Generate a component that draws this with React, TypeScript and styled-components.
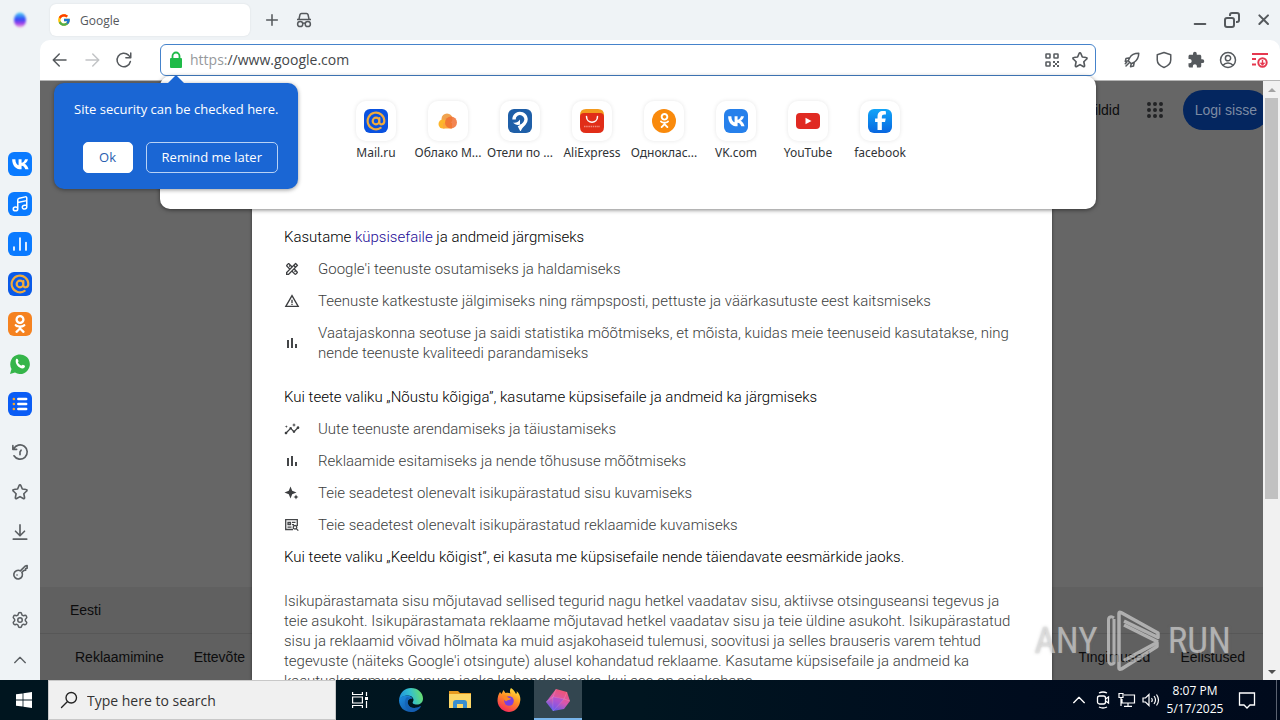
import React from "react";
import styled, { createGlobalStyle, css } from "styled-components";
import { Settings } from "lucide-react";
import { FcGoogle } from "react-icons/fc";
import { FaOdnoklassniki, FaFacebookF } from "react-icons/fa6";
import {
  MdOutlineDesignServices,
  MdWarningAmber,
  MdInsights,
  MdExtension,
} from "react-icons/md";

const Global = createGlobalStyle`
  *, *::before, *::after { box-sizing: border-box; }
  body { margin: 0; font-family: "Liberation Sans", Arial, sans-serif; }
  button { font: inherit; padding: 0; border: 0; background: none; color: inherit; }
  svg { display: block; flex: none; }
  a { color: inherit; text-decoration: none; }
`;

const ui = `"Open Sans", "Segoe UI", sans-serif`;

/* ---------- shell ---------- */

const Desktop = styled.div`
  display: flex;
  flex-direction: column;
  height: 100vh;
  overflow: hidden;
`;

const Browser = styled.div`
  display: flex;
  flex: 1;
  min-height: 0;
  background: #eff3f6;
  color: #5b5f63;
`;

const Sidebar = styled.nav`
  display: flex;
  flex-direction: column;
  width: 40px;
  flex: none;
`;

const SideGroup = styled.div<{ $push?: boolean }>`
  display: flex;
  flex-direction: column;
  margin-top: ${(p) => (p.$push ? "auto" : "8px")};
`;

const SideButton = styled.button`
  display: flex;
  align-items: center;
  justify-content: center;
  width: 40px;
  height: 40px;
`;

const AppBadge = styled.span<{ $bg: string; $round?: boolean }>`
  display: flex;
  align-items: center;
  justify-content: center;
  width: 24px;
  height: 24px;
  border-radius: ${(p) => (p.$round ? "12px" : "6px")};
  background: ${(p) => p.$bg};
  color: #fff;
`;

const MainColumn = styled.div`
  display: flex;
  flex-direction: column;
  flex: 1;
  min-width: 0;
`;

/* ---------- tab strip ---------- */

const TabStrip = styled.div`
  display: flex;
  align-items: center;
  height: 40px;
  padding-left: 10px;
  flex: none;
`;

const Tab = styled.div`
  display: flex;
  align-items: center;
  gap: 9px;
  width: 200px;
  height: 32px;
  margin-right: 6px;
  padding-left: 7px;
  border-radius: 6px;
  background: #fff;
  box-shadow: 0 0 2px rgba(0, 0, 0, 0.1);
  font: 12px ${ui};
  color: #55585c;
`;

const StripButton = styled.button<{ $slim?: boolean }>`
  display: flex;
  align-items: center;
  justify-content: center;
  width: ${(p) => (p.$slim ? "28px" : "32px")};
  height: 32px;
  color: #55595d;
`;

const WindowControls = styled.div`
  display: flex;
  margin-left: auto;
`;

/* ---------- toolbar ---------- */

const Toolbar = styled.div`
  display: flex;
  align-items: center;
  height: 41px;
  flex: none;
  padding: 0 4px 1px;
  background: #fff;
  border-bottom: 1px solid #b5b5b5;
  border-radius: 10px 10px 0 0;
`;

const ToolGroup = styled.div`
  display: flex;
`;

const Address = styled.form`
  position: relative;
  z-index: 5;
  display: flex;
  align-items: center;
  flex: 1;
  height: 32px;
  margin: 0 20px;
  padding: 0 1px 0 8px;
  border: 1px solid #4583cb;
  border-radius: 6px;
  background: #fff;
`;

const AddressText = styled.label`
  display: flex;
  flex: 1;
  margin-left: 7px;
  color: #44474a;
  font: 14px/20px ${ui};
`;

const Scheme = styled.span`
  color: #96999c;
`;

const AddressInput = styled.input`
  flex: 1;
  min-width: 0;
  padding: 0;
  border: 0;
  outline: 0;
  background: none;
  font: inherit;
  color: inherit;
`;

const Suggestions = styled.div`
  position: absolute;
  top: 31px;
  left: -1px;
  right: -1px;
  display: flex;
  justify-content: center;
  height: 133px;
  padding-top: 25px;
  border-radius: 10px;
  background: #fff;
  box-shadow: 0 1px 4px rgba(0, 0, 0, 0.5);
`;

const Tile = styled.a`
  display: flex;
  flex-direction: column;
  align-items: center;
  width: 72px;
  font: 12px/16px "Noto Sans", sans-serif;
  color: #303336;
  white-space: nowrap;
`;

const TileFrame = styled.span`
  display: flex;
  align-items: center;
  justify-content: center;
  width: 40px;
  height: 40px;
  margin-bottom: 4px;
  border-radius: 10px;
  box-shadow: 0 0 4px rgba(0, 0, 0, 0.1);
`;

const Hint = styled.div`
  position: absolute;
  top: 38px;
  left: -107px;
  width: 244px;
  padding: 16px 20px;
  border-radius: 10px;
  background: #1a66d4;
  box-shadow: 0 1px 4px rgba(0, 0, 0, 0.4);
  color: #fff;
  font: 13px/20px ${ui};
  white-space: nowrap;

  &::before {
    content: "";
    position: absolute;
    top: -8px;
    left: 114px;
    border: 8px solid transparent;
    border-top: 0;
    border-bottom-color: #1a66d4;
  }
`;

const HintText = styled.p`
  margin: 0 0 23px;
`;

const HintActions = styled.div`
  display: flex;
  justify-content: flex-end;
  gap: 13px;
`;

const HintButton = styled.button<{ $filled?: boolean }>`
  min-width: 50px;
  height: 31px;
  padding: 0 15px;
  border: 1px solid ${(p) => (p.$filled ? "#fff" : "#b8d2f5")};
  border-radius: 5px;
  ${(p) =>
    p.$filled &&
    css`
      background: #fff;
      color: #2a5daf;
    `}
`;

/* ---------- page ---------- */

const Viewport = styled.main`
  position: relative;
  display: flex;
  flex: 1;
  flex-direction: column;
  justify-content: space-between;
  min-height: 0;
  overflow: hidden;
  background: #666;
  color: #0c0c0d;
  font-size: 14px;
`;

const PageHeader = styled.header`
  display: flex;
  align-items: center;
  justify-content: flex-end;
  padding: 9px 11px;
`;

const AppsButton = styled.button`
  margin: 0 16px 0 23px;
  color: #222325;
`;

const SignIn = styled.button`
  height: 40px;
  padding: 0 12px;
  border-radius: 20px;
  background: #04265f;
  color: #7d8ba3;
`;

const PageFooter = styled.footer`
  background: #606060;
  line-height: 46px;
`;

const Country = styled.div`
  padding: 0 30px;
  border-bottom: 1px solid #575757;
`;

const FooterLinks = styled.div`
  display: flex;
  justify-content: space-between;
  padding: 0 20px;
`;

const FooterGroup = styled.div`
  display: flex;

  a {
    padding: 0 15px;
  }
`;

const Overlay = styled.div`
  position: absolute;
  inset: 0 16px 0 0;
  display: flex;
  justify-content: center;
`;

const Consent = styled.section`
  width: 800px;
  padding: 146px 32px 0;
  background: #fff;
  box-shadow: 0 0 3px rgba(0, 0, 0, 0.5);
  color: #3c3e40;
  font: 300 15px/20px Roboto, "Liberation Sans", sans-serif;
`;

const Lead = styled.p`
  margin: 0;
  color: #000;

  a {
    color: #1a0a96;
  }
`;

const Reasons = styled.ul<{ $last?: boolean }>`
  display: flex;
  flex-direction: column;
  gap: 12px;
  margin: 12px 0 ${(p) => (p.$last ? "12px" : "24px")};
  padding: 0;
  list-style: none;

  li {
    display: flex;
    align-items: center;
    gap: 18px;
  }
`;

const Details = styled.p`
  margin: 24px 0 0;
  white-space: pre-line;
`;

const Scrollbar = styled.div`
  position: absolute;
  inset: 0 0 0 auto;
  display: flex;
  flex-direction: column;
  align-items: center;
  width: 17px;
  background: #f1f1f1;
`;

const ScrollArrow = styled.span<{ $down?: boolean }>`
  width: 0;
  height: 0;
  margin: ${(p) => (p.$down ? "auto 0 6px" : "7px 0 6px")};
  border: 4px solid transparent;
  ${(p) =>
    p.$down
      ? css`
          border-top-color: #505050;
          border-bottom: 0;
        `
      : css`
          border-bottom-color: #a3a3a3;
          border-top: 0;
        `}
`;

const ScrollThumb = styled.span`
  width: 13px;
  height: 67%;
  background: #c1c1c1;
`;

const Watermark = styled.div`
  position: absolute;
  right: 49px;
  bottom: 5px;
  display: flex;
  align-items: center;
  gap: 7px;
  color: rgba(228, 228, 228, 0.6);
  font: 37px/68px "Roboto Condensed", "Open Sans Condensed", "Noto Sans Condensed", "Liberation Sans Narrow", Roboto, sans-serif;
  text-shadow: 0 0 3px rgba(120, 120, 120, 0.5);
`;

/* ---------- taskbar ---------- */

const Taskbar = styled.footer`
  display: flex;
  align-items: stretch;
  height: 40px;
  flex: none;
  background: linear-gradient(90deg, #00151f, #001520 50%, #000c1e 80%, #000a1c);
  color: #fff;
  font-family: ${ui};
`;

const TaskButton = styled.button<{ $active?: boolean }>`
  display: flex;
  align-items: center;
  justify-content: center;
  width: 48px;
  ${(p) =>
    p.$active &&
    css`
      background: #334650;
      box-shadow: inset 0 -2px #78b4ea;
    `}
`;

const TaskApps = styled.div`
  display: flex;
  gap: 1px;
  margin-left: 3px;
`;

const SearchBox = styled.label`
  display: flex;
  align-items: center;
  gap: 9px;
  width: 288px;
  padding-left: 11px;
  background: #f0f0f0;
  border: 1px solid #c8c8c8;
  color: #222;
`;

const SearchInput = styled.input`
  flex: 1;
  min-width: 0;
  padding: 0;
  border: 0;
  outline: 0;
  background: none;
  font: 14px ${ui};

  &::placeholder {
    color: #333;
    opacity: 1;
  }
`;

const Tray = styled.div`
  display: flex;
  align-items: center;
  margin-left: auto;
  padding-right: 3px;
`;

const TrayButton = styled.button<{ $w: number }>`
  display: flex;
  align-items: center;
  justify-content: center;
  width: ${(p) => p.$w}px;
  height: 40px;
`;

const Clock = styled.time`
  width: 64px;
  font-size: 12px;
  line-height: 18px;
  text-align: center;
  white-space: nowrap;
`;

const ShowDesktop = styled.span`
  width: 1px;
  height: 40px;
  margin-left: 9px;
  background: #5a6270;
`;

/* ---------- icons ---------- */

type LineProps = { d: string; size?: number; width?: number; color?: string };

/* Stroke icon on a 24-unit grid. */
const Line = ({ d, size = 20, width = 2, color = "currentColor" }: LineProps) => (
  <svg
    width={size}
    height={size}
    viewBox="0 0 24 24"
    fill="none"
    stroke={color}
    strokeWidth={width}
    strokeLinecap="round"
    strokeLinejoin="round"
  >
    <path d={d} />
  </svg>
);

const star =
  "M12 2.5c.5 0 .9.3 1.1.8l2 4.7 5.1.6c1.1.1 1.5 1.4.7 2.1l-3.8 3.6 1 5.1c.2 1-.9 1.8-1.8 1.3L12 18.2l-4.4 2.5c-.9.5-2-.3-1.8-1.3l1-5.1L3 10.700c-.8-.7-.4-2 .7-2.100l5.100-.6 2-4.700c.2-.5.700-.8 1.200-.8z";

const At = ({ size = 20 }: { size?: number }) => (
  <Line
    size={size}
    width={2.6}
    color="#f0ab3c"
    d="M16 12a4 4 0 1 1-8 0 4 4 0 0 1 8 0zM16 8.500V13.500c0 3.600 6 3.400 6-1.500A10 10 0 1 0 17.500 20.300"
  />
);

const VkMark = () => (
  <svg width="18" height="18" viewBox="0 0 24 24" fill="#fff">
    <path d="M13.300 19C6.200 19 1.700 14 1.500 5.500h4.300c.1 5.200 2.300 7.500 4.300 8V5.500h4v4.800c2-.2 3.900-2.300 4.600-4.800h3.900c-.6 3.200-2.900 5.300-4.600 6.300 1.700.8 4.300 2.700 5.400 7.200h-4.300c-.8-2.500-2.500-4.300-5-4.600V19z" />
  </svg>
);

const BrowserMark = () => (
  <svg width="24" height="24" viewBox="0 0 24 24">
    <defs>
      <linearGradient id="mark" x2="0" y2="1">
        <stop offset="0" stopColor="#50d0f5" />
        <stop offset=".45" stopColor="#3048f8" />
        <stop offset=".75" stopColor="#a440e8" />
        <stop offset="1" stopColor="#f5b8dc" />
      </linearGradient>
      <filter id="soft" x="-30%" y="-30%" width="160%" height="160%">
        <feGaussianBlur stdDeviation="1" />
      </filter>
    </defs>
    <ellipse cx="12" cy="12" rx="6" ry="7.500" fill="url(#mark)" filter="url(#soft)" />
  </svg>
);

const Incognito = () => (
  <svg width="16" height="16" viewBox="0 0 16 16" fill="none" stroke="currentColor" strokeWidth="1.500">
    <path d="M1 7.500h14M3 7l1-4.500Q4.300 1.500 5.500 1.500h5q1.200 0 1.500 1L13 7" />
    <circle cx="4.200" cy="12" r="2.600" />
    <circle cx="11.800" cy="12" r="2.600" />
    <path d="M6.800 11.500q1.200-.8 2.400 0" />
  </svg>
);

const Restore = () => (
  <svg width="16" height="16" viewBox="0 0 16 16" fill="none" stroke="currentColor" strokeWidth="2">
    <rect x="1" y="6" width="9" height="9" rx="2" />
    <path d="M6 4V3q0-2 2-2h5q2 0 2 2v5q0 2-2 2h-1" />
  </svg>
);

const Lock = () => (
  <svg width="14" height="18" viewBox="0 0 14 18">
    <path d="M3.500 8V5a3.500 3.500 0 0 1 7 0v3" fill="none" stroke="#1fbb48" strokeWidth="1.800" />
    <rect x="1" y="7" width="12" height="10" rx="1" fill="#1fbb48" />
  </svg>
);

const QrCode = () => (
  <svg width="16" height="16" viewBox="0 0 16 16" fill="none" stroke="#5b5f63" strokeWidth="1.600">
    <rect x="2" y="2" width="4" height="4" rx=".5" />
    <rect x="10" y="2" width="4" height="4" rx=".5" />
    <rect x="2" y="10" width="4" height="4" rx=".5" />
    <path d="M9 10h2M13 10h2M11 12h2M9 14h2M13 14h2" strokeWidth="2" />
  </svg>
);

const Downloads = () => (
  <svg width="18" height="18" viewBox="0 0 18 18" fill="none" stroke="#e5384f">
    <path d="M1 3h16M1 8h4M1 13.500h4" strokeWidth="1.800" />
    <circle cx="11.500" cy="11.500" r="4.200" fill="#fff" strokeWidth="2" />
    <path d="M11.500 9v4.500M9.500 11.700l2 2 2-2" strokeWidth="1.400" />
  </svg>
);

const Rocket = () => (
  <Line
    d="M21 3c-6 0-10 2-12 6L4 10l-1 4 4-1 4 4-1 4 4-1 1-5c4-3 6-7 6-12zM9 9l-2 4M15 15l-4 2M8 16l-4 4M5 15l-2 2"
    width={2}
    size={18}
  />
);

const Account = () => (
  <Line
    d="M22 12a10 10 0 1 1-20 0 10 10 0 0 1 20 0zM15.500 9.500a3.500 3.500 0 1 1-7 0 3.500 3.500 0 0 1 7 0zM5.500 19c3-4 10-4 13 0"
    size={18}
  />
);

const AppsGrid = () => (
  <svg width="24" height="24" viewBox="0 0 24 24" fill="none" stroke="currentColor" strokeWidth="4" strokeLinecap="round">
    <path d="M6 6h0M12 6h0M18 6h0M6 12h0M12 12h0M18 12h0M6 18h0M12 18h0M18 18h0" />
  </svg>
);

const Bars = () => (
  <svg width="16" height="16" viewBox="0 0 16 16" fill="#444648">
    <path d="M3 5h2v8H3zM7 3h2v10H7zM11 9h2v4h-2z" />
  </svg>
);

const Sparkle = () => (
  <svg width="16" height="16" viewBox="0 0 16 16" fill="#3c3e40">
    <path d="M6.500 1.500l1.700 4.300 4.300 1.700-4.300 1.700-1.700 4.300-1.700-4.300L.5 7.500l4.300-1.700zM12 9.500l.8 1.700 1.700.8-1.700.8-.8 1.700-.8-1.700-1.700-.8 1.700-.8z" />
  </svg>
);

const AdSearch = () => (
  <svg width="16" height="16" viewBox="0 0 16 16" fill="none" stroke="#444648" strokeWidth="1.300">
    <path d="M9 12.500H1.700V2.700h11.600V9" />
    <path d="M4 5.500h2.500v2H4zM8 5.300h3.500M8 7.700h2M3.500 10.200h4" />
    <circle cx="11" cy="10.300" r="1.800" />
    <path d="M12.300 11.600l2 2" />
  </svg>
);

const Cloud = () => (
  <svg width="20" height="16" viewBox="0 0 20 16">
    <circle cx="9" cy="6" r="5.500" fill="#f0a350" />
    <circle cx="5" cy="11" r="4.500" fill="#fdb52b" />
    <path d="M5 10h9v5.500H5z" fill="#fba83b" />
    <circle cx="13" cy="9.500" r="6" fill="#f07033" opacity=".85" />
  </svg>
);

const HotelPin = () => (
  <svg width="20" height="20" viewBox="0 0 20 20">
    <path d="M4 8.500a6 6 0 1 1 10.200 4.200C12.800 14 11.500 15.200 10.500 17L9.200 14.500" fill="none" stroke="#fff" strokeWidth="3.400" />
    <path d="M3 11.500c2.500.8 5-.2 7-3v3.500L9.500 18l5-3.500-2-2c-2 1.500-7 2.500-9.500-1z" fill="#fff" />
  </svg>
);

const AliBag = () => (
  <svg width="24" height="24" viewBox="0 0 24 24">
    <path d="M0 8V6q0-6 6-6h12q6 0 6 6v2z" fill="#f39a1e" />
    <path d="M0 8q0-4 4-4h16q4 0 4 4v10q0 6-6 6H6q-6 0-6-6z" fill="#e12d18" />
    <path d="M6.500 7.500c0 7.500 11 7.500 11 0" fill="none" stroke="#fff" strokeWidth="1.500" strokeLinecap="round" />
    <path d="M4 17.500h16" stroke="#f08a7c" strokeWidth="1.500" strokeDasharray="1.500 .7" />
  </svg>
);

const YouTube = () => (
  <svg width="24" height="16" viewBox="0 0 24 16">
    <rect width="24" height="16" rx="4" fill="#e02a22" />
    <path d="M9.500 4.800l6 3.200-6 3.200z" fill="#fff" />
  </svg>
);

const ListMark = () => (
  <svg width="18" height="18" viewBox="0 0 16 16" strokeWidth="2.200" strokeLinecap="round">
    <path d="M2.500 3.500h.1M2.500 8h.1M2.500 12.500h.1" stroke="#f5a62c" />
    <path d="M6.500 3.500h7M6.500 8h7M6.500 12.500h7" stroke="#fff" />
  </svg>
);

const Windows = () => (
  <svg width="16" height="16" viewBox="0 0 16 16" fill="#fff">
    <path d="M0 2.300l6.600-.9v6.200H0zM7.400 1.300L16 0v7.600H7.400zM0 8.400h6.600v6.200L0 13.700zM7.400 8.400H16V16l-8.600-1.200z" />
  </svg>
);

const TaskView = () => (
  <svg width="18" height="18" viewBox="0 0 18 18" fill="none" stroke="#fff" strokeWidth="1.200">
    <path d="M1.600 1v2.500h9.800V1M1.600 17v-2.500h9.800V17M1.600 6h9.800v6H1.600zM15.500 1v4M15.500 10v7" />
    <path d="M14 6h3v3h-3z" fill="#fff" stroke="none" />
  </svg>
);

const Edge = () => (
  <svg width="24" height="24" viewBox="0 0 24 24">
    <defs>
      <linearGradient id="edgeTop" x1="0" y1=".6" x2="1" y2=".4">
        <stop offset="0" stopColor="#1f8fdc" />
        <stop offset=".5" stopColor="#33bfd0" />
        <stop offset="1" stopColor="#6be06a" />
      </linearGradient>
      <linearGradient id="edgeLow" x2="1" y2="1">
        <stop offset="0" stopColor="#1b8ee0" />
        <stop offset="1" stopColor="#124a9c" />
      </linearGradient>
    </defs>
    <path d="M0 12C1 4 6 0 12 0c7 0 12 5 12 10.500 0 4-3 6-6 6-3.500 0-5-1.500-4.200-2.500C16 11 13 7.500 9 7.500 4 7.500 1 10 0 12z" fill="url(#edgeTop)" />
    <path d="M0 12c1-3 4.500-4.500 8-4.500 3 0 5 1.500 5.500 3.500C10 10 8 13 9 16c1.500 4.500 7.500 5 13 2-2 4-6 6-10 6C5 24 0 19 0 12z" fill="url(#edgeLow)" />
    <path d="M8 9c-3.500 3-3.500 12 4 15 4 0 8-2 10-6-5.500 3-11.500 2.500-13-2-1-3 .5-5.500 3-6z" fill="#1460b4" opacity=".7" />
  </svg>
);

const Folder = () => (
  <svg width="22" height="20" viewBox="0 0 22 20">
    <path d="M0 1h9l2 2h11v3H0z" fill="#e79a20" />
    <path d="M0 4h22v14H0z" fill="#fcd667" />
    <path d="M4 18v-5q0-3 3-3h8q3 0 3 3v5h-4v-4H8v4z" fill="#3a8ed0" />
  </svg>
);

const Firefox = () => (
  <svg width="24" height="24" viewBox="0 0 24 24">
    <defs>
      <linearGradient id="fox" x1=".8" x2=".3" y2="1">
        <stop offset="0" stopColor="#ffe83e" />
        <stop offset=".45" stopColor="#ff9225" />
        <stop offset="1" stopColor="#f5265c" />
      </linearGradient>
    </defs>
    <path d="M14 0c3 2 4 4 5 6 1-1 1-2 .5-3C23 6 24 10 23 14c-1 6-6 10-11 10S1 20 .5 13C.5 9 1.500 6 3 4l1.500 2L6.500 2l2 3c2-.5 3.500-.5 5 .5C12.500 4 13 1.500 14 0z" fill="url(#fox)" />
    <circle cx="12" cy="13" r="4.800" fill="#7a3fe0" />
    <path d="M5 8c3-1 5 0 6 1.500l3 1c-1 2-4 1.500-5 3-1-1-2-1.500-2-3z" fill="#ff8a22" />
  </svg>
);

const Gem = () => (
  <svg width="24" height="24" viewBox="0 0 24 24">
    <defs>
      <linearGradient id="gem" x1=".7" x2=".2" y2="1">
        <stop offset="0" stopColor="#f2546f" />
        <stop offset=".5" stopColor="#d757b0" />
        <stop offset="1" stopColor="#4a5cf5" />
      </linearGradient>
    </defs>
    <path d="M10 1l11 3 3 9-6 8-11 2-7-9z" fill="url(#gem)" />
    <path d="M10 1l-3 8-7 5M7 9l11 2 3-7M18 11l6 2M18 11l-11 12M7 9v14" fill="none" stroke="#fff" strokeOpacity=".15" />
    <path d="M7 9l11 2L7 23z" fill="#8a4ff0" opacity=".45" />
  </svg>
);

const Meet = () => (
  <svg width="14" height="18" viewBox="0 0 14 18" fill="none" stroke="#fff" strokeWidth="1.300">
    <path d="M3 2q4-2 8 0M3 16q4 2 8 0" />
    <rect x="1.500" y="5" width="8" height="8" rx="2" />
    <path d="M9.500 8l3-2v6l-3-2" />
  </svg>
);

const Network = () => (
  <svg width="18" height="16" viewBox="0 0 18 16" fill="none" stroke="#fff" strokeWidth="1.200">
    <path d="M6 3h10.500v8H4V7M10 11v3M6 14.400h8M1 1.500h4v4H1zM3 5.500V14" />
  </svg>
);

const Volume = () => (
  <svg width="18" height="16" viewBox="0 0 18 16" fill="none" stroke="#fff" strokeWidth="1.200">
    <path d="M1 6h2.500L7 2.500v11L3.500 10H1zM9.500 6q1.500 2 0 4M12 4q3 4 0 8M14.500 2.500q4 5.500 0 11" />
  </svg>
);

const PlayLogo = () => (
  <svg width="56" height="62" viewBox="0 0 56 62" fill="none" stroke="currentColor" strokeLinejoin="round">
    <path d="M9 8C6.500 6 3.500 6.500 3.500 10v40c0 4 2.500 5.500 5.500 3V9" strokeWidth="3" />
    <path d="M14 50V3.500q0-2 2-1L53 23v4.500L19 11M14 50v8q0 2 2.500 1L52 36.500v-4L19 50.500M19 15l34 17" strokeWidth="3.500" />
  </svg>
);

/* ---------- data ---------- */

const tiles = [
  { label: "Mail.ru", icon: <AppBadge $bg="#0a52e0"><At /></AppBadge> },
  { label: "Облако М...", icon: <Cloud /> },
  { label: "Отели по ...", icon: <AppBadge $bg="#1f5fa8"><HotelPin /></AppBadge> },
  { label: "AliExpress", icon: <AliBag /> },
  { label: "Одноклас...", icon: <AppBadge $bg="#f98a0c" $round><FaOdnoklassniki size={15} /></AppBadge> },
  { label: "VK.com", icon: <AppBadge $bg="#2680eb"><VkMark /></AppBadge> },
  { label: "YouTube", icon: <YouTube /> },
  { label: "facebook", icon: <AppBadge $bg="linear-gradient(#12a5f8, #0866e0)"><FaFacebookF size={19} /></AppBadge> },
];

const sideApps = [
  { label: "VK", icon: <AppBadge $bg="#0a7aff"><VkMark /></AppBadge> },
  {
    label: "Music",
    icon: (
      <AppBadge $bg="#0a7aff">
        <Line size={18} width={2} color="#fff" d="M9 18.500a3 2.500 0 1 1-6 0 3 2.500 0 0 1 6 0zM9 18.500V6.500c0-1.500 1-2 2-2.300l8-1.700c1.500-.3 2 .5 2 1.500V16a3 2.500 0 1 1-3-2.300h3M9 10l12-2.500" />
      </AppBadge>
    ),
  },
  {
    label: "Charts",
    icon: <AppBadge $bg="#0a7aff"><Line size={18} width={2.300} color="#fff" d="M4 16v4M12 4v16M20 10v10" /></AppBadge>,
  },
  { label: "Mail", icon: <AppBadge $bg="#0a5ae8"><At size={20} /></AppBadge> },
  { label: "Odnoklassniki", icon: <AppBadge $bg="#f58220"><FaOdnoklassniki size={18} /></AppBadge> },
  {
    label: "WhatsApp",
    icon: (
      <svg width="22" height="22" viewBox="0 0 22 22">
        <path d="M1 21l1.500-5A9.800 9.800 0 1 1 6 19.600z" fill="#35b54a" />
        <path d="M7 6.200c.6-.7 1.500-.6 1.800.1l.7 1.600c.2.600-.8 1.300-.6 1.700.8 1.500 1.800 2.400 3.300 3 .5.200 1.100-1.100 1.700-.9l1.700.9c.8.4.3 1.900-.5 2.400-3.600 2-10-4-8.100-8.800z" fill="#fff" />
      </svg>
    ),
  },
  { label: "News", icon: <AppBadge $bg="#0a5cf5"><ListMark /></AppBadge> },
];

const sideTools = [
  { label: "History", icon: <Line size={18} width={2.200} d="M3.500 8A9.500 9.500 0 1 1 4 17M2.500 3.500V8.500H7.500M13.500 9.500L12 12v3.500" /> },
  { label: "Bookmarks", icon: <Line size={18} width={2.200} d={star} /> },
  { label: "Downloads", icon: <Line size={18} width={2.200} d="M12 2.500v14M6 11l6 6 6-6M3 21.500h18" /> },
  { label: "Passwords", icon: <Line size={18} width={2.200} d="M12.500 10.500L19 4l2.500-.5V7l-2 .5v2l-2.500.5-2.500 2.500a5.800 5.800 0 1 1-2-2zM8 16h.1" /> },
];

const firstReasons = [
  { icon: <MdOutlineDesignServices size={16} />, text: "Google'i teenuste osutamiseks ja haldamiseks" },
  { icon: <MdWarningAmber size={16} />, text: "Teenuste katkestuste jälgimiseks ning rämpsposti, pettuste ja väärkasutuste eest kaitsmiseks" },
  { icon: <Bars />, text: "Vaatajaskonna seotuse ja saidi statistika mõõtmiseks, et mõista, kuidas meie teenuseid kasutatakse, ning nende teenuste kvaliteedi parandamiseks" },
];

const moreReasons = [
  { icon: <MdInsights size={16} />, text: "Uute teenuste arendamiseks ja täiustamiseks" },
  { icon: <Bars />, text: "Reklaamide esitamiseks ja nende tõhususe mõõtmiseks" },
  { icon: <Sparkle />, text: "Teie seadetest olenevalt isikupärastatud sisu kuvamiseks" },
  { icon: <AdSearch />, text: "Teie seadetest olenevalt isikupärastatud reklaamide kuvamiseks" },
];

const details = [
  "Isikupärastamata sisu mõjutavad sellised tegurid nagu hetkel vaadatav sisu, aktiivse otsinguseansi tegevus ja",
  "teie asukoht. Isikupärastamata reklaame mõjutavad hetkel vaadatav sisu ja teie üldine asukoht. Isikupärastatud",
  "sisu ja reklaamid võivad hõlmata ka muid asjakohaseid tulemusi, soovitusi ja selles brauseris varem tehtud",
  "tegevuste (näiteks Google'i otsingute) alusel kohandatud reklaame. Kasutame küpsisefaile ja andmeid ka",
  "kasutuskogemuse vanuse jaoks kohandamiseks, kui see on asjakohane.",
].join("\n");

export default function App() {
  return (
    <Desktop>
      <Global />
      <Browser>
        <Sidebar aria-label="Sidebar">
          <SideButton aria-label="Menu"><BrowserMark /></SideButton>
          <SideGroup $push>
            {sideApps.map((a) => (
              <SideButton key={a.label} aria-label={a.label}>{a.icon}</SideButton>
            ))}
          </SideGroup>
          <SideGroup>
            {sideTools.map((a) => (
              <SideButton key={a.label} aria-label={a.label}>{a.icon}</SideButton>
            ))}
          </SideGroup>
          <SideGroup>
            <SideButton aria-label="Settings"><Settings size={18} strokeWidth={2} /></SideButton>
            <SideButton aria-label="Collapse"><Line size={16} d="M4 16l8-8 8 8" /></SideButton>
          </SideGroup>
        </Sidebar>

        <MainColumn>
          <TabStrip>
            <Tab><FcGoogle size={14} />Google</Tab>
            <StripButton aria-label="New tab"><Line size={16} d="M12 4v16M4 12h16" width={2.300} /></StripButton>
            <StripButton aria-label="Incognito"><Incognito /></StripButton>
            <WindowControls>
              <StripButton aria-label="Minimize"><Line size={16} width={3} d="M4 18h16" /></StripButton>
              <StripButton aria-label="Restore"><Restore /></StripButton>
              <StripButton aria-label="Close"><Line size={16} width={3} d="M5 5l13 13M18 5L5 18" /></StripButton>
            </WindowControls>
          </TabStrip>

          <Toolbar>
            <ToolGroup>
              <StripButton aria-label="Back"><Line size={18} d="M20 12H3M11 4l-8 8 8 8" /></StripButton>
              <StripButton aria-label="Forward"><Line size={18} color="#c2c4c6" d="M4 12h17M13 4l8 8-8 8" /></StripButton>
              <StripButton aria-label="Reload"><Line size={18} d="M20.500 14A9 9 0 1 1 18 5.500l2.500 3M21 2.500V9h-6.500" /></StripButton>
            </ToolGroup>
            <Address onSubmit={(e) => e.preventDefault()}>
              <Lock />
              <AddressText htmlFor="address">
                <Scheme>https:</Scheme>
                <AddressInput id="address" aria-label="Address" defaultValue="//www.google.com" />
              </AddressText>
              <StripButton type="button" $slim aria-label="QR code"><QrCode /></StripButton>
              <StripButton type="button" $slim aria-label="Bookmark"><Line size={18} width={2.200} d={star} /></StripButton>
              <Suggestions>
                {tiles.map((t) => (
                  <Tile key={t.label} href="#">
                    <TileFrame>{t.icon}</TileFrame>
                    {t.label}
                  </Tile>
                ))}
              </Suggestions>
              <Hint role="dialog">
                <HintText>Site security can be checked here.</HintText>
                <HintActions>
                  <HintButton type="button" $filled>Ok</HintButton>
                  <HintButton type="button">Remind me later</HintButton>
                </HintActions>
              </Hint>
            </Address>
            <ToolGroup>
              <StripButton aria-label="Boost"><Rocket /></StripButton>
              <StripButton aria-label="Protection"><Line size={18} d="M12 2l9 3v7c0 5-4 8-9 10-5-2-9-5-9-10V5z" /></StripButton>
              <StripButton aria-label="Extensions"><MdExtension size={18} /></StripButton>
              <StripButton aria-label="Account"><Account /></StripButton>
              <StripButton aria-label="Downloads"><Downloads /></StripButton>
            </ToolGroup>
          </Toolbar>

          <Viewport>
            <PageHeader>
              <a href="#">Pildid</a>
              <AppsButton aria-label="Apps"><AppsGrid /></AppsButton>
              <SignIn>Logi sisse</SignIn>
            </PageHeader>
            <PageFooter>
              <Country>Eesti</Country>
              <FooterLinks>
                <FooterGroup><a href="#">Reklaamimine</a><a href="#">Ettevõte</a></FooterGroup>
                <FooterGroup><a href="#">Tingimused</a><a href="#">Eelistused</a></FooterGroup>
              </FooterLinks>
            </PageFooter>
            <Overlay>
              <Consent role="dialog">
                <Lead>Kasutame <a href="#">küpsisefaile</a> ja andmeid järgmiseks</Lead>
                <Reasons>
                  {firstReasons.map((r) => (
                    <li key={r.text}>{r.icon}<span>{r.text}</span></li>
                  ))}
                </Reasons>
                <Lead>Kui teete valiku „Nõustu kõigiga”, kasutame küpsisefaile ja andmeid ka järgmiseks</Lead>
                <Reasons $last>
                  {moreReasons.map((r) => (
                    <li key={r.text}>{r.icon}<span>{r.text}</span></li>
                  ))}
                </Reasons>
                <Lead>Kui teete valiku „Keeldu kõigist”, ei kasuta me küpsisefaile nende täiendavate eesmärkide jaoks.</Lead>
                <Details>{details}</Details>
              </Consent>
            </Overlay>
            <Scrollbar>
              <ScrollArrow />
              <ScrollThumb />
              <ScrollArrow $down />
            </Scrollbar>
            <Watermark aria-hidden="true">
              <span>ANY</span>
              <PlayLogo />
              <span>RUN</span>
            </Watermark>
          </Viewport>
        </MainColumn>
      </Browser>

      <Taskbar>
        <TaskButton aria-label="Start"><Windows /></TaskButton>
        <SearchBox>
          <Line size={18} width={1.800} d="M22 9a7 7 0 1 1-14 0 7 7 0 0 1 14 0zM10 14l-8 8" />
          <SearchInput placeholder="Type here to search" aria-label="Type here to search" />
        </SearchBox>
        <TaskButton aria-label="Task view"><TaskView /></TaskButton>
        <TaskApps>
          <TaskButton aria-label="Edge"><Edge /></TaskButton>
          <TaskButton aria-label="Files"><Folder /></TaskButton>
          <TaskButton aria-label="Firefox"><Firefox /></TaskButton>
          <TaskButton aria-label="Browser" $active><Gem /></TaskButton>
        </TaskApps>
        <Tray>
          <TrayButton $w={24} aria-label="Hidden icons"><Line size={16} width={2} d="M4 16l8-8 8 8" /></TrayButton>
          <TrayButton $w={24} aria-label="Meet now"><Meet /></TrayButton>
          <TrayButton $w={24} aria-label="Network"><Network /></TrayButton>
          <TrayButton $w={24} aria-label="Volume"><Volume /></TrayButton>
          <Clock>8:07 PM<br />5/17/2025</Clock>
          <TrayButton $w={40} aria-label="Notifications">
            <svg width="18" height="18" viewBox="0 0 18 18" fill="none" stroke="#fff" strokeWidth="1.300">
              <path d="M1.500 2h15v12H12l-3 3-3-3H1.500z" />
            </svg>
          </TrayButton>
          <ShowDesktop />
        </Tray>
      </Taskbar>
    </Desktop>
  );
}
